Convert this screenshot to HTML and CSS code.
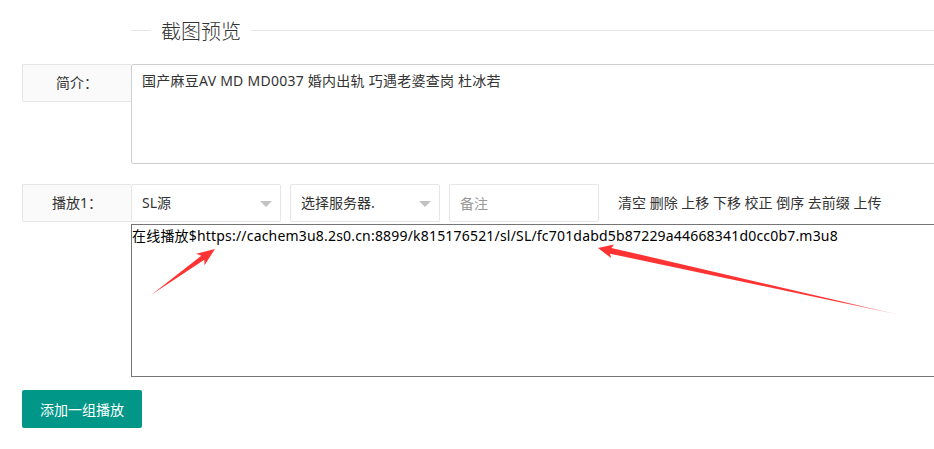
FILE: index.html
```
<!DOCTYPE html>
<html lang="zh-CN">
<head>
    <meta charset="UTF-8">
    <meta name="viewport" content="width=device-width, initial-scale=1.0">
    <title>编辑视频</title>
    <link rel="stylesheet" href="styles.css">
</head>
<body>
    <div class="page">
        <fieldset class="title-line">
            <legend>截图预览</legend>
        </fieldset>

        <div class="form-item">
            <label class="form-label">简介：</label>
            <textarea class="textarea intro">国产麻豆AV MD MD0037 婚内出轨 巧遇老婆查岗 杜冰若</textarea>
        </div>

        <div class="form-item play-row">
            <label class="form-label">播放1：</label>
            <div class="select">
                <span>SL源</span>
                <i class="edge"></i>
            </div>
            <div class="select">
                <span>选择服务器.</span>
                <i class="edge"></i>
            </div>
            <input type="text" class="input" placeholder="备注">
            <div class="tools">
                <a href="#">清空</a> <a href="#">删除</a> <a href="#">上移</a> <a href="#">下移</a> <a href="#">校正</a> <a href="#">倒序</a> <a href="#">去前缀</a> <a href="#">上传</a>
            </div>
        </div>

        <div class="url-row">
            <textarea class="url-box">在线播放$https://cachem3u8.2s0.cn:8899/k815176521/sl/SL/fc701dabd5b87229a44668341d0cc0b7.m3u8</textarea>
        </div>

        <button type="button" class="btn">添加一组播放</button>

        <!-- red arrows drawn over the screenshot -->
        <svg class="arrows" width="934" height="449" viewBox="0 0 934 449">
            <defs>
                <linearGradient id="fade1" gradientUnits="userSpaceOnUse" x1="151" y1="295" x2="215" y2="249">
                    <stop offset="0" stop-color="#ff3333" stop-opacity="0.85"/>
                    <stop offset="0.3" stop-color="#ff3333"/>
                </linearGradient>
                <linearGradient id="fade2" gradientUnits="userSpaceOnUse" x1="900" y1="315" x2="598" y2="248">
                    <stop offset="0" stop-color="#ff3333" stop-opacity="0.3"/>
                    <stop offset="0.2" stop-color="#ff3333"/>
                </linearGradient>
            </defs>
            <polygon fill="url(#fade1)" points="151,295 201.3,255.8 196.3,253.8 215,249 204.5,265.2 204.3,259.8"/>
            <polygon fill="url(#fade2)" points="900,315 611.4,247.9 614.1,244.5 598,248 611.1,258.1 610,253.7"/>
        </svg>
    </div>
</body>
</html>
```

FILE: styles.css
```
* {
    margin: 0;
    padding: 0;
    box-sizing: border-box;
}

body {
    background: #fff;
    font-family: "Noto Sans", "Noto Sans CJK SC", sans-serif;
    font-size: 14px;
    color: #333;
    overflow: hidden;
}

.page {
    position: relative;
    width: 934px;
    height: 449px;
    padding-left: 22px;
    overflow: hidden;
}

.title-line {
    margin: 15px 0 19px 109px;
    border: none;
    border-top: 1px solid #e6e6e6;
    min-width: 0;
}

.title-line legend {
    margin-left: 20px;
    padding: 4px 10px 0;
    font-size: 20px;
    line-height: 26px;
    font-weight: 300;
    color: #333;
}

.form-item {
    display: flex;
    align-items: flex-start;
}

.form-label {
    flex: none;
    width: 109px;
    height: 38px;
    line-height: 36px;
    text-align: center;
    background: #fafafa;
    border: 1px solid #e6e6e6;
    border-right: none;
    border-radius: 2px 0 0 2px;
    color: #333;
}

.textarea {
    flex: none;
    width: 860px;
    height: 100px;
    padding: 6px 10px;
    line-height: 20px;
    border: 1px solid #cfcfcf;
    border-radius: 2px;
    font-family: inherit;
    font-size: 14px;
    letter-spacing: 0.25px;
    color: #333;
    resize: none;
    outline: none;
}

.play-row {
    margin-top: 20px;
}

.select {
    position: relative;
    flex: none;
    width: 150px;
    height: 38px;
    margin-right: 9px;
    padding-left: 10px;
    line-height: 36px;
    border: 1px solid #e6e6e6;
    border-radius: 2px;
    color: #333;
}

.select .edge {
    position: absolute;
    right: 8px;
    top: 16px;
    width: 0;
    height: 0;
    border-style: solid;
    border-width: 6px 6px 0 6px;
    border-color: #c2c2c2 transparent transparent transparent;
}

.input {
    flex: none;
    width: 150px;
    height: 38px;
    padding-left: 10px;
    border: 1px solid #e6e6e6;
    border-radius: 2px;
    font-family: inherit;
    font-size: 14px;
    outline: none;
}

.input::placeholder {
    color: #999;
}

.tools {
    margin-left: 19px;
    line-height: 38px;
    white-space: nowrap;
}

.tools a {
    color: #333;
    text-decoration: none;
}

.url-row {
    margin: 2px 0 0 109px;
}

.url-box {
    display: block;
    width: 860px;
    height: 153px;
    padding: 1px 0;
    line-height: 20px;
    border: 1px solid #767676;
    font-family: inherit;
    font-size: 14px;
    letter-spacing: 0.19px;
    color: #000;
    resize: none;
    outline: none;
}

.btn {
    display: block;
    margin-top: 13px;
    height: 38px;
    padding: 0 18px;
    background: #009688;
    color: #fff;
    border: none;
    border-radius: 2px;
    font-family: inherit;
    font-size: 14px;
    cursor: pointer;
}

.arrows {
    position: absolute;
    left: 0;
    top: 0;
    pointer-events: none;
}
```
